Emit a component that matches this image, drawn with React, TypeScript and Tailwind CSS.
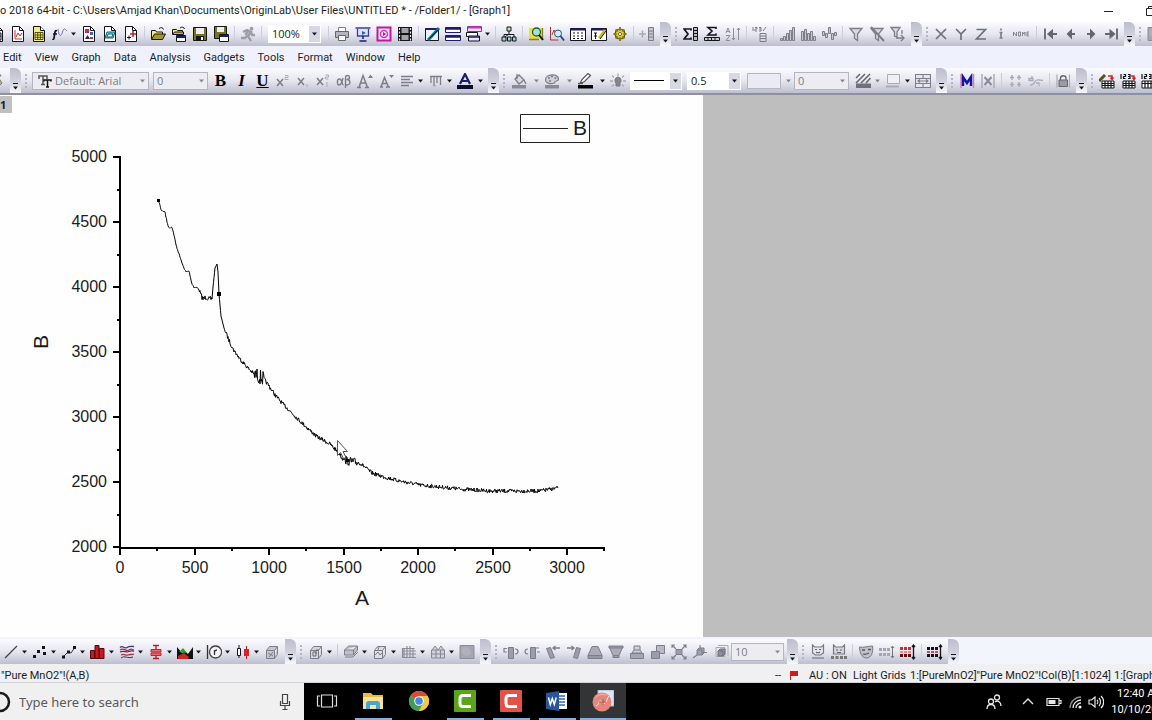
import React from "react";

/* Each icon is a list of [path, fill, stroke, strokeWidth] drawn on a 16x16 grid. */
type Layer = [string, string?, string?, number?];

const G = "#7d7e8a";
const L = "#a9aab6";
const K = "#14141c";
const N = "#1c1c6e";
const n = "none";
const DOC = "M2.5.5h7l4 4v11h-11z";
const FOLD = "M9.5.5v4h4";
const CUBE = "M2.5 6.5h8v8h-8zM2.5 6.5l3-4h8l-3 4M13.5 2.5v8l-3 4";
const GRIDBOX = "M3 8h12v7H3z";
const GRIDLINES = "M3 10.5h12M3 12.5h12M6 8v7M9 8v7M12 8v7";

const icons: Record<string, Layer[]> = {
  docGrid: [[DOC, "#fff", K], [FOLD, n, K], ["M4 7h8v7H4z", "#ddd", K], ["M4 10h8M8 7v7", n, K]],
  docGraph: [[DOC, "#fff", K], [FOLD, n, K], ["M5 4v9h7", n, "#c33"], ["M6 11l2-4 2 3 2-3", n, "#c22"]],
  docTable: [[DOC, "#f4ee7c", K], [FOLD, "#fff", K], ["M4 6.5h8v7H4zM4 9h8M4 11.3h8M6.7 6.5v7M9.4 6.5v7", n, "#55500c"]],
  func: [["M5 5c-2-1-2 1-2.500 4s-.5 5-2 4M1 8h4", n, K, 1.7], ["M6 3c1 8 3 8 4.500 3S13 3 15 5", n, "#7d6ca8"]],
  docMix: [[DOC, "#fff", K], [FOLD, n, K], ["M4 3h4v4H4z", "#d23"], ["M9 6h3v3H9z", "#36c"], ["M4 13l2.500-4 2.500 4z", "#226"], ["M9 11h3v2H9z", "#c33"]],
  docTeal: [[DOC, "#fff", K], [FOLD, n, K], ["M5 6h8l-2 6H3z", "#6fd0cf", "#167"], ["M6 8h5l-1 3H5z", "#fff", "#167"]],
  docStar: [[DOC, "#fff", K], [FOLD, n, K], ["M10 5v6M7 8h6", n, "#b22", 1.5], ["M4 11.500h4M6 9.500v4", n, K]],
  open: [["M1.500 13V4.500h4l1 1.500h6V8", "#f3ec8c", K], ["M1.500 13.500L4.500 8h11l-3 5.500z", "#a39b28", K], ["M9 2.500c2-1.500 4-1 4.500 1", n, K]],
  openTpl: [["M1.500 8V3.500h4l1 1h5V7", "#f3ec8c", K], ["M1.500 8.500h11V6h-9z", "#c8bf3a", K], ["M5.500 9.500h9v6h-9z", "#fff", K], ["M5.500 11h9", n, N, 2], ["M9 2c2-1.500 4-1 4.500 1", n, K]],
  save: [["M1.500 1.500h13v13h-13z", "#77751c", K], ["M4 2h8v6H4z", "#efeff3"], ["M4 10h8v4H4z", K], ["M9 11h2v3H9z", "#fff"]],
  saveTpl: [["M1.500.5h12v12h-12z", "#77751c", K], ["M4 1h7v5H4z", "#efeff3"], ["M6.500 8.500h9v7h-9z", "#fff", K], ["M6.500 10h9", n, N, 2]],
  run: [["M11.500.8a1.900 1.900 0 1 0 .1 0z", "#9c9da9"], ["M3 6l4-2 4 2-3 4 3 5M7.500 9.500L5 12H1M11 6l1 3h3M8 5L5.500 9", n, "#9c9da9", 2.4]],
  print: [["M4.500 1.500h7v4h-7z", "#fff", G], ["M1.500 5.500h13v6h-13z", "#b4b5c0", "#666"], ["M4.500 9.500h7v5h-7z", "#fff", "#666"]],
  present: [["M.5 2h15M2.500 3v7h11V3", "#dce4ff", "#3c3c9c", 1.3], ["M8 10v3M4.500 15h7", n, N, 1.5], ["M7 5l4 2-4 2z", "#3358c8"]],
  magenta: [["M1.500 1.500h13v13h-13z", "#ffe6ff", "#c1169f", 2], ["M4.500 8a3.500 3.500 0 1 1 7 0 3.500 3.500 0 0 1-7 0z", n, "#d235b8", 1.5], ["M7 6l3 2-3 2z", "#b1109a"]],
  film: [["M1 1h14v14H1z", K], ["M4.500 2h7v5h-7zM4.500 9h7v5h-7z", "#a2a5a5"], ["M2.500 2v2M2.500 5.500v2M2.500 9v2M2.500 12.500v2M13.500 2v2M13.500 5.500v2M13.500 9v2M13.500 12.500v2", n, "#eee", 1.2]],
  pen: [["M1.500 2.500h13v12h-13z", "#e8f6fb", K], ["M1.500 3h13", n, N, 2], ["M15 2L7 11l-3 3", n, "#186a8c", 3], ["M14 4L6 12", n, K]],
  tile: [["M.5 1.500h15v5H.5zM.5 9.500h15v5H.5z", "#fff", N], ["M.5 2.500h15M.5 10.500h15", n, N, 2.5]],
  cascade: [["M1.500.5h14v5h-14z", "#fbd8f8", "#9c2b96"], ["M2 1.500h13", n, "#b640b0", 2], ["M.5 6.500h11v4H.5z", "#fff", K], ["M2.500 10h11v5h-11z", "#e7e7f5", K], ["M3 11h10", n, N, 1.5]],
  tree: [["M8 5v4M3 11V8.500h10V11M8 8l-4 3", n, K], ["M6 1h4v4H6z", "#bde4c8", K], ["M1 11h4v4H1zM6.500 11h3.500v4H6.500zM11.500 11H15v4h-3.500z", "#9cd5cf", K]],
  lookup: [["M1 2h13v11H1z", "#eedd3f"], ["M1 13.500h10M14.500 2v12", n, "#8b7d17", 1.3], ["M4.500 6a4 4 0 1 1 8 0 4 4 0 0 1-8 0z", "#a9dfd0", "#1b5a4a", 1.3], ["M11 9l4 5", n, K, 2]],
  zoomChart: [["M1.500 1v13h8", n, "#a33"], ["M3 9l2-5 2 4 2-4", n, "#b33"], ["M5.500 7.500a3.500 3.500 0 1 1 7 0 3.500 3.500 0 0 1-7 0z", "#cdeef5", "#357"], ["M11.500 10l3.500 4.500", n, "#234a94", 2]],
  table: [["M.5 2.500h15v12H.5z", "#fff", K], ["M.5 3.500h15", n, N, 2], ["M3 7h2M7 7h2M11 7h2M3 10h2M7 10h2M11 10h2M3 12.500h2M7 12.500h2M11 12.500h2", n, K, 1.2]],
  tablePen: [["M.5 2.500h15v12H.5z", "#fff", K], ["M.5 3.500h15", n, N, 2], ["M3 7h3M3 10h3M4.500 7v6", n, K], ["M14 4L8 12", n, "#d2b90e", 2.5], ["M15 5L9 13", n, K]],
  gear: [["M8 3a5 5 0 1 0 .1 0z", "#d9c63a", "#5c530e", 1.2], ["M8 1v14M1.500 8h13M3.500 3.500l9 9M12.500 3.500l-9 9", n, "#857810", 1.8], ["M8 4.500a3.500 3.500 0 1 0 .1 0z", "#ddca3f"], ["M8 6.500a1.500 1.500 0 1 0 .1 0z", "#fff", "#5c530e"]],
  addCol: [["M0 8h7M3.500 4.500v7", n, L, 1.5], ["M9.500 1.500h5v13h-5z", "#c4c5cf", G], ["M9.500 5h5M9.500 8h5M9.500 11h5", n, G]],
  sumCol: [["M8 4.500V3H1l4 5-4 5h7v-1.500", n, K, 1.7], ["M10.500 1.500h4v13h-4z", "#bbb", K], ["M10.500 4.500h4M10.500 7.500h4M10.500 10.500h4", n, K]],
  sumRow: [["M12 3V1.500H4L8 5 4 9h8V7.500", n, K, 1.6], ["M.5 11.500h15v3H.5z", "#ccc", K], ["M4 11.500v3M7.500 11.500v3M11 11.500v3", n, K]],
  sort: [["M1 7l2-5 2 5M1.500 5.500h3M1 9.500h4l-4 5h4M8.500 2v12M7 12l1.500 2 1.500-2M13.500 14V2M12 4l1.500-2L15 4", n, "#8d8e99"]],
  pct: [["M1 1v4M3 1.500h2v1.500H3V5h2M7 1.500h2V5H7M7 3h2M11 5l3-4", n, G], ["M8 7.500h6v8H8zM8 10h6M8 12.500h6", n, G]],
  barsUp: [["M1.500 14.500v-2h2v2zM4.500 14.500v-4h2v4zM7.500 14.500v-7h2v7zM10.500 14.500v-10h2v10zM13.500 14.500v-13h2v13z", "#c6c7d1", G]],
  barsMid: [["M1.500 14.500v-9h2v9zM4.500 14.500v-11h2v11zM7.500 14.500v-7h2v7zM10.500 14.500v-9h2v9zM13.500 14.500v-4h2v4z", "#c6c7d1", G]],
  barsWave: [["M1.500 9.500v-4h2v4zM4.500 11.500v-4h2v4zM7.500 7.500v-6h2v6zM10.500 13.500v-6h2v6zM13.500 9.500v-3h2v3z", "#c6c7d1", G]],
  funnel: [["M2 2.500h12L9.500 8v6.500l-3-2V8z", "#d8d9e2", G, 1.3]],
  funnelOff: [["M2 2.500h12L9.500 8v6.500l-3-2V8z", "#d8d9e2", G, 1.3], ["M2 1l13 14", n, G, 2]],
  funnelGo: [["M1 1.500h9L7 6v5l-2.500-1V6z", "#d8d9e2", G, 1.3], ["M6 12h8M11 9l3 3-3 3M12 4v4", n, G, 1.3]],
  axX: [["M3 3l10 10M13 3L3 13", n, "#6e707c", 1.7]],
  axY: [["M3 3l5 5 5-5M8 8v6", n, "#6e707c", 1.7]],
  axZ: [["M3.500 3.500h9l-9 9.500h9.500", n, "#6e707c", 1.7]],
  axI: [["M8 2.500v2M8 6v6M6.500 6.500h3M6.500 12h3", n, "#7e808c", 1.7]],
  none: [["M.5 10V6l3 4V6M5.500 6h2v4h-2zM9.500 10V6l1.500 2 1-2v4M16 6h-2v4h2M14 8h2", n, "#84858f", 1]],
  first: [["M2 2.500v11", n, "#63656f", 1.8], ["M14 8H7M9 5L5.500 8 9 11z", "#63656f", "#63656f", 2]],
  prev: [["M12 8H7M8 5L5 8l3 3z", "#63656f", "#63656f", 2]],
  next: [["M4 8h5M8 5l3 3-3 3z", "#63656f", "#63656f", 2]],
  last: [["M14 2.500v11", n, "#63656f", 1.8], ["M2 8h6M7.500 5L11 8l-3.500 3z", "#63656f", "#63656f", 2]],
  brush: [["M3 12l6-8 4 6-4 4z", "#c7b48c", "#777"], ["M9 4l3-2", n, G, 2]],
  sup: [["M2 6l6 7M8 6l-6 7", n, G, 1.5], ["M10 2.500h3v2h-3v2h3.500", n, L]],
  sub: [["M3 5l6 7M9 5l-6 7", n, G, 1.5], ["M12 11v3", n, L]],
  supsub: [["M2 5l6 7M8 5l-6 7", n, G, 1.5], ["M10.500 2h3v2h-3v2h3M12 9v5", n, L]],
  greek: [["M7 5c-1 5-2 7-4 7S.5 6 3.500 6s2 6 4 6M9.500 15V5c0-3.500 4-3 4-.5 0 2-3 2-3 2 4.500 0 4.500 5.500.5 5.500H9.500", n, G, 1.4]],
  fontUp: [["M0 14.500h4M8 14.500h4M2 14.500L6 2.500l4.500 12M3.500 10h5.500", n, G, 1.5], ["M11 5l2.500-3.500L16 5z", G]],
  fontDown: [["M2 14h3M8 14h4M3 14L6.500 4.500 10.500 14M4.500 10.500h4.500", n, G, 1.5], ["M11 2l2.500 3L16 2z", G]],
  align: [["M2 3.500h12M2 6.500h9M2 9.500h12M2 12.500h8", n, G, 1.3]],
  vert: [["M2 3.500h12M3 3v7M6 3v10M9 3v7M12.500 3v9", n, G, 1.3], ["M5 13h3", n, L]],
  fontColor: [["M0 12h16v4H0z", "#0c0c2c"], ["M3 11L8 1l5 10M5 8h6", n, N, 2.2]],
  bucket: [["M1 12h14v3.500H1z", "#898a92"], ["M4 6l4-4 5 5-5 4z", "#d9dae2", G, 1.3], ["M13 7l2 4M6 1v5", n, G, 1.3]],
  palette: [["M1 12h14v3.500H1z", "#898a92"], ["M1.500 6.500C1.500 1 14.500 0 14.500 6c0 3-4 1-4 4-3 1-9 1-9-3.500z", "#cfd0d9", G, 1.2], ["M4 5h2M7 3.500h2M10.500 5h2M5 8h2", n, G, 1.6]],
  pencil: [["M1 12h15v3.500H1z", "#000"], ["M3 10.500l2-4 6-6 2.500 2-6 6z", "#fff", "#555", 1.2], ["M1 10.500h5", n, "#555", 1.2]],
  glow: [["M8 4a3.500 3.500 0 0 1 2 6v3H6v-3a3.500 3.500 0 0 1 2-6z", "#85868f", "#777", 1], ["M8 .5v2.500M2 2.500L4 4.500M14 2.500L12 4.500M0 8h3M13 8h3M2 13.500l2-2M14 13.500l-2-2", n, L, 1.3]],
  hatch: [["M1 10.500h15V15H1z", "#707178"], ["M1 5l4-4M1 10l9-9M6 10l9-9M11 10l4.500-5", n, "#64656e", 1.5]],
  border: [["M2.500 1.500h12v9h-12z", "#efeff5", L], ["M1 13.500h13", n, L, 2]],
  cells: [["M.5 1.500h15v13H.5zM.5 5.500h15M.5 10.500h15M8 1.500v4M8 10.500v4M3 8h10M5 6.500L3 8l2 1.500M11 6.500L13 8l-2 1.500", "#e4e5ed", G, 1.1]],
  mBlue: [["M2 1v14M14.500 1v14", n, "#d67fb0", 1.5], ["M4 13V4l4 6 4-6v9", n, "#1515a0", 2.5]],
  xGray: [["M2 1v14M14 1v14", n, L, 1.4], ["M4.500 4l7 8M11.500 4l-7 8", n, "#8b8c98", 2]],
  scatterA: [["M5 2v5M3 4.500h4M5 9v5M3 11.500h4M12 2v5M10 4.500h4M12 9v5M10 11.500h4", n, L, 1.4]],
  scatterB: [["M1 5.500h4v2H1zM2 12c3 0 4-1 5-3.500S12 7 15 7.500M4 3v3M8 10h3v3", n, L, 1.3]],
  lock: [["M2 1.500v13M14.500 1.500v13", n, L, 1.2], ["M5.500 7V5c0-3 5.500-3 5.500 0v2", n, "#666", 1.3], ["M4 7h8.500v6.500H4z", "#9a9ba5", "#666"]],
  wand: [[GRIDBOX, "#fff", K], [GRIDLINES, n, K, 1.2], ["M0 8l6-6", n, "#555310", 3], ["M9 3h4v3M11.500 4.500l1.500 2 1.500-2", n, "#d22", 1.5]],
  num1: [[GRIDBOX, "#fff", K], [GRIDLINES, n, K, 1.2], ["M1 1v5M3.500 1.500h2v2h-2v2h2M8 1.500h2v4H8M8 3.500h2", n, K, 1.2], ["M11 3h3v3M12.500 4.500l1.500 2 1.500-2", n, "#d22", 1.4]],
  num2: [["M1 8h12v7H1z", "#fff", K], ["M1 10.500h12M4 8v7M7 8v7M10 8v7", n, K, 1.2], ["M1 1v5M3.500 1.500h2v2h-2v2h2M8 1.500h2v4H8M8 3.500h2", n, K, 1.2], ["M11 3h3v3M12.500 4.500l1.500 2 1.500-2", n, "#d22", 1.4]],
  line: [["M2 14L14 2", n, "#444", 1.2]],
  dots: [["M1 11h3v3H1zM5 6h3v3H5zM11 8h3v3h-3zM10 2h3v3h-3z", K]],
  lineDots: [["M2 13l5-5 3 1 4-6", n, "#333"], ["M1 11.500h3v3H1zM6 6.500h3v3H6zM12 2h3v3h-3z", K]],
  columns: [["M.5 14.500v-8h4v8zM5 14.500v-13h4v13zM9.500 14.500v-10h4.500v10z", "#c31a22", "#54090c"]],
  multi: [["M1 3.500c3-3 4 2 7 0s4-1 7-1M1 8c4-2 6 1 9-.5s4 0 5-.5", n, "#33338c", 1.3], ["M1 6c4-3 6 2 9 0s3 0 5 0M2 11c3-2 5 1 7 0s4 0 6-1", n, "#bb2929", 1.3], ["M2 14c4-3 6 1 12-1", n, "#334"]],
  box: [["M3 5.500h10v2.500H3zM3 9h10v2.500H3z", "#f0686c", "#c3222a"], ["M8 1v4M8 11.500V15M5 1.500h6M5 14.500h6", n, "#c31a22", 1.4]],
  area: [["M0 15V3l5 6 3-2 3 3 5-7v12z", "#111"], ["M2 8l4-4 4 5z", "#2aa52a"], ["M1 12l6-3 5 4-1 2H1z", "#c9232b"]],
  polar: [["M1.500 1v14", n, "#333", 1.3], ["M9.500 2a6 6 0 1 0 .1 0z", "#f4f4fa", "#444", 1.3], ["M8.500 11V6M8.500 7.500c1-1.500 2-1.500 2.500-1.500", n, "#333", 1.3]],
  candle: [["M4 1v3M4 11v3", n, K], ["M2.500 4.500h3v7h-3z", "#fff", K], ["M11.500 2v13", n, "#c31a22"], ["M9 5h5v7H9z", "#db2229"]],
  cube: [[CUBE, "#c5c6d1", G], ["M4 9l5 3M5 13l4-5", n, G]],
  cubeAxes: [[CUBE, "#d4d5de", G], ["M5 12V8h3v4zM8 10V6h3", n, "#6c6d78"]],
  slab: [["M1.500 10V6l4-4h9v4l-4 5h-9zM1.500 6h9l4-4M10.500 6v5", "#bfc0cb", G], ["M2 13h8l5-5", n, G]],
  wire: [[CUBE, "#dcdde5", G], ["M3 11l3-3 2 3 2-2", n, G], ["M7 3l-1 3", n, G]],
  grid3: [["M1.500 13.500v-9h12M3 4v9M6 2v11M9 2v11M12 4v9M1 7h14M1 10h14M1 13.500h14", n, "#8c8d98", 1.2]],
  mesh: [["M1.500 6h13v8h-13zM1.500 10h13M6 6v8M10.500 6v8M2 6l3-4 3 4 3-4 3 4", "#cfd0d9", "#878893"]],
  blob: [["M1 1.500h14v13H1z", "#a5a6b3", "#8c8d99"], ["M3 4c5-3 8 1 9 4s-5 4-7 3-4-4-2-7z", "#b0b1bd"]],
  tiltL: [["M5.500 3.500h5v11h-5z", "#9c9dab", G], ["M4 8H1V4.500h3M12 5c4 0 4 5 0 5", n, G, 1.2]],
  tiltR: [["M6.500 3.500h5v11h-5z", "#9c9dab", G], ["M13 8h3M4 5c-4 0-4 5 0 5M12 4h3", n, G, 1.2]],
  rotL: [["M1.500 4.500l4-1 4 10-4 1z", "#9c9dab", G], ["M8 4h7M10.500 2L8 4l2.500 2", n, G, 1.3]],
  rotR: [["M14.500 4.500l-4-1-3 10 4 1z", "#9c9dab", G], ["M1 4h7M5.500 2L8 4 5.500 6", n, G, 1.3]],
  trapUp: [["M5 2.500h6l4 9H1z", "#aaabb7", G], ["M1 14.500h14v-3H1z", "#9798a5", G]],
  trapDown: [["M1 2.500h14l-4 9H5z", "#aaabb7", G], ["M1 2h14v2H1zM5 11.500h6v2H5z", "#9798a5", G]],
  lift: [["M1.500 9.500h13v5h-13z", "#a5a6b3", G], ["M5 6h6l2 3H3zM5 6V2h6v4", "#cfd0da", G]],
  overlap: [["M6.500 1.500h8v8h-8z", "#b8b9c4", G], ["M1.500 7.500h8v7h-8z", "#9c9dab", G]],
  expand: [["M5 5.500h6v5H5z", "#9c9dab", G], ["M1 4V1h3M12 1h3v3M1 12v3h3M12 15h3v-3M1 1l4 4M15 1l-4 4M1 15l4-4M15 15l-4-4", n, G, 1.1]],
  move: [["M5 6h5v5H5zM5 6l2-2h5v5l-2 2", "#a0a1ae", G], ["M8 1v3M10 8.500h5M1 14l4-3", n, G, 1.1]],
  boxIn: [["M3 3.500h9v9H3zM5 1.500h10v10", n, L], ["M5 7h5v5H5zM5 7l2-2h5v5l-2 2", "#8f909d", "#6d6e79"]],
  mask: [["M2.500 1l2 2h7l2-2v8l-3 2h-5l-3-2z", "#e6e7ee", "#777883", 1.2], ["M5 5.500h2M9 5.500h2M6 8c1 1 3 1 4 0M2 14h12", n, "#666", 1.2]],
  maskDots: [["M2.500 1l2 2h7l2-2v9h-11z", "#d5d6df", "#777883", 1.2], ["M5 6h2M9 6h2M6 8.500h4", n, "#666", 1.2], ["M0 12h3v3H0zM4.500 12h3v3h-3zM9 12h3v3H9zM13 12h3v3h-3z", "#777"]],
  theatre: [["M1.500 3c4 1 9-1 13-1 1 6-1 12-6 12s-7-6-7-11z", "#bfc0cb", "#777"], ["M4 6h3M10 5.500h3M5 10c2 1 4 0 6-1", n, "#555", 1.3]],
  dotsGray: [["M0 4h3v3H0zM4 4h3v3H4zM8 4h3v3H8zM0 9h3v3H0zM4 9h3v3H4zM8 9h3v3H8z", "#a5a6b1"], ["M13.500 2v12M12 4l1.500-2L15 4M12 12l1.500 2 1.500-2", n, "#777"]],
  dotsRed: [["M0 3h3v3H0zM4 3h3v3H4zM8 3h3v3H8z", "#b33"], ["M0 7h3v2H0zM4 7h3v2H4zM8 7h3v2H8z", "#e88"], ["M0 10h3v3H0zM4 10h3v3H4zM8 10h3v3H8z", "#511"], ["M13.500 1v14M12 3l1.500-2L15 3M12 13l1.500 2 1.500-2", n, K, 1.3]],
  dotsBlack: [["M0 3h3v3H0zM4 3h3v3H4zM8 3h3v3H8z", K], ["M0 7h3v2H0zM4 7h3v2H4zM8 7h3v2H8z", "#d44"], ["M0 10h3v3H0zM4 10h3v3H4zM8 10h3v3H8z", K], ["M13.500 1v14M12 3l1.500-2L15 3M12 13l1.500 2 1.500-2", n, K, 1.3]],
};

function Icon({ name }: { name: string }) {
  return (
    <svg viewBox="0 0 16 16" className="size-4 shrink-0" aria-hidden="true">
      {icons[name].map(([d, fill = n, stroke = n, sw = 1], i) => (
        <path key={i} d={d} fill={fill} stroke={stroke} strokeWidth={sw} />
      ))}
    </svg>
  );
}

function Arrow({ muted }: { muted?: boolean }) {
  return (
    <svg viewBox="0 0 7 4" className={`h-1 w-[7px] shrink-0 ${muted ? "text-[#85868f]" : "text-[#16161e]"}`} aria-hidden="true">
      <path d="M1 .5h5L3.500 3.500z" fill="currentColor" />
    </svg>
  );
}

function Tools({ names, cell = "w-[21px]" }: { names: string[]; cell?: string }) {
  return (
    <>
      {names.map((name) => (
        <button key={name} type="button" aria-label={name} className={`flex h-full shrink-0 items-center justify-center ${cell}`}>
          <Icon name={name} />
        </button>
      ))}
    </>
  );
}

function Letter({ label, text, look }: { label: string; text: string; look: string }) {
  return (
    <button
      type="button"
      aria-label={label}
      className={`flex h-full w-[21px] shrink-0 items-center justify-center font-['Liberation_Serif',serif] text-[17px] leading-4 font-bold text-black ${look}`}
    >
      {text}
    </button>
  );
}

function Drops({ names, cell = "w-[29px]", muted }: { names: string[]; cell?: string; muted?: boolean }) {
  return (
    <>
      {names.map((name) => (
        <button key={name} type="button" aria-label={`${name} options`} className={`flex h-full shrink-0 items-center justify-between pr-px pl-[3px] ${cell}`}>
          <Icon name={name} />
          <Arrow muted={muted} />
        </button>
      ))}
    </>
  );
}

function Sep({ cell = "w-[6px]" }: { cell?: string }) {
  return (
    <span className={`flex h-full shrink-0 items-center justify-center ${cell}`}>
      <span className="h-4 w-px bg-[#cbcdd9]" />
    </span>
  );
}

function More({ grip = true }: { grip?: boolean }) {
  return (
    <>
      <button
        type="button"
        aria-label="Toolbar options"
        className="ml-[3px] flex h-full w-[11px] shrink-0 flex-col items-center justify-end gap-[2px] rounded-tr-md bg-linear-to-b from-[#bdbecc] via-[#cfd0dc] to-[#f7f7fd] pb-[3px]"
      >
        <span className="h-px w-[5px] bg-[#16161e]" />
        <Arrow />
      </button>
      {grip && (
        <span className="flex h-full w-[9px] shrink-0 flex-col items-center justify-center gap-[2px]">
          {[0, 1, 2, 3].map((i) => (
            <span key={i} className="size-[2px] bg-[#b3b5c3]" />
          ))}
        </span>
      )}
    </>
  );
}

function Combo({ label, value, cell, tone, icon, swatch }: {
  label: string;
  value: string;
  cell: string;
  tone: "live" | "muted";
  icon?: boolean;
  swatch?: boolean;
}) {
  const live = tone === "live";
  return (
    <label className={`relative flex h-[18px] shrink-0 items-center ${cell}`}>
      <select
        aria-label={label}
        defaultValue={value}
        className={`h-full w-full appearance-none border text-[11px] leading-4 ${icon ? "pl-[22px]" : "pl-[3px]"} ${
          live ? "border-white bg-white text-[#222]" : "border-[#b4b6c2] bg-[#ededf1] text-[#7c7d85]"
        }`}
      >
        <option>{value}</option>
      </select>
      {icon && (
        <svg viewBox="0 0 14 14" className="absolute left-[6px] size-[14px]" aria-hidden="true">
          <path d="M1 5V2h8v3M5 2v8M3 10.500h4" fill="none" stroke="#555" strokeWidth="1.500" />
          <path d="M6 7.500V6h7v1.500M9.500 6v7M8 13h3" fill="none" stroke="#111" strokeWidth="1.500" />
        </svg>
      )}
      {swatch && <span className="absolute left-1 h-px w-[30px] bg-black" />}
      <span className={`absolute right-px flex h-4 w-[11px] items-center justify-center ${live ? "bg-[#d7d8e3]" : ""}`}>
        <Arrow muted={!live} />
      </span>
    </label>
  );
}

const bar = "flex shrink-0 items-center overflow-hidden bg-linear-to-b from-[#fbfbff] via-[#e6e7f0] to-[#bebfce]";
const menus = ["Edit", "View", "Graph", "Data", "Analysis", "Gadgets", "Tools", "Format", "Window", "Help"];

/* Spectrum samples in page units; the noise is seeded so every render is identical. */
const knots: [number, number][] = [
  [158, 200], [160, 205], [161, 210], [165, 212], [167, 222], [169, 228], [172, 227], [174, 235], [176, 245], [180, 257],
  [183, 266], [186, 272], [189, 271], [192, 284], [194, 287], [198, 288], [201, 295], [203, 299], [206, 297], [209, 299],
  [212, 299], [213, 287], [215, 268], [217, 264], [218, 272], [219, 294], [221, 316], [224, 328], [228, 338], [233, 349],
  [240, 359], [248, 368], [254, 374], [264, 379], [269, 386], [275, 395], [283, 404], [300, 421], [316, 436], [330, 444],
  [340, 454], [347, 461], [360, 463], [372, 473], [384, 477], [400, 481], [420, 485], [440, 487], [460, 489], [490, 491],
  [520, 491], [540, 491], [558, 488],
];

function buildCurve(): string {
  let seed = 7;
  const rand = () => {
    seed = (seed * 16807) % 2147483647;
    return seed / 2147483647 - 0.5;
  };
  const out: string[] = [];
  for (let i = 0; i < knots.length - 1; i++) {
    const [x0, y0] = knots[i];
    const [x1, y1] = knots[i + 1];
    for (let x = x0; x < x1; x += 0.5) {
      const t = (x - x0) / (x1 - x0);
      let spread = x < 200 ? 1.5 : x < 212 ? 5 : x < 225 ? 0 : 4;
      if (x > 254 && x < 264) spread = 15;
      if (x > 340 && x < 358) spread = 9;
      const y = y0 + (y1 - y0) * t + rand() * spread;
      out.push(`${x} ${y.toFixed(1)}`);
    }
  }
  return `M${out.join("L")}L558 488`;
}

const curve = buildCurve();
const yTicks = [5000, 4500, 4000, 3500, 3000, 2500, 2000];
const xTicks = [0, 500, 1000, 1500, 2000, 2500, 3000];

function Chart() {
  return (
    <svg viewBox="0 95 702 542" width="702" height="542" className="shrink-0 font-['Liberation_Sans',Arial,sans-serif]" role="img" aria-label="Graph1">
      <g stroke="#000" strokeWidth="2" fill="none" shapeRendering="crispEdges">
        <path d="M120 156V548H605" />
        {yTicks.map((v, i) => (
          <path key={v} d={`M113 ${157 + i * 65}h7${i < 6 ? `M117 ${190 + i * 65}h3` : ""}`} />
        ))}
        {xTicks.map((v, i) => (
          <path key={v} d={`M${Math.round(120 + i * 74.5)} 548v7M${Math.round(157 + i * 74.5)} 548v3`} />
        ))}
      </g>
      <g fontSize="16" fill="#1b1b22">
        {yTicks.map((v, i) => (
          <text key={v} x="107" y={162 + i * 65} textAnchor="end">{v}</text>
        ))}
        {xTicks.map((v, i) => (
          <text key={v} x={Math.round(120 + i * 74.5)} y="573" textAnchor="middle">{v}</text>
        ))}
      </g>
      <g fontSize="21" fill="#1b1b22">
        <text x="362" y="605" textAnchor="middle">A</text>
        <text transform="translate(48 342) rotate(-90)" textAnchor="middle">B</text>
        <text x="573" y="135">B</text>
      </g>
      <path d="M520.500 114.500h69v28h-69zM523 128.500h45" fill="none" stroke="#222" />
      <path d={curve} fill="none" stroke="#000" strokeLinejoin="bevel" />
      <path d="M157 199h3v3h-3zM217 292h4v4h-4zM346 459h3v3h-3z" fill="#000" />
      <path d="M337.500 440.500v15l3-3 3 6 2.500-1-3-6h4.500z" fill="#fff" stroke="#555" />
    </svg>
  );
}

function TaskIcon({ name, active, open, children }: { name: string; active?: boolean; open?: boolean; children: React.ReactNode }) {
  return (
    <button type="button" aria-label={name} className={`flex h-full w-[46px] shrink-0 flex-col items-center ${active ? "bg-[#333436]" : ""}`}>
      <span className="flex flex-1 items-center">
        <svg viewBox="0 0 22 22" className="size-[22px]" aria-hidden="true">{children}</svg>
      </span>
      <span className={`h-[2px] ${active ? "w-full" : "w-[37px]"} ${open ? "bg-[#7fb2e4]" : ""}`} />
    </button>
  );
}

export default function App() {
  return (
    <div className="flex h-screen w-full flex-col overflow-hidden bg-[#f0f0f0] font-['Open_Sans','Noto_Sans',sans-serif] text-[11px] text-[#1d1d24]">
      <header className="flex h-[22px] shrink-0 items-center justify-between bg-white whitespace-nowrap">
        <h1 className="font-['Roboto',sans-serif] text-[11px] leading-4">o 2018 64-bit - C:\Users\Amjad Khan\Documents\OriginLab\User Files\UNTITLED * - /Folder1/ - [Graph1]</h1>
        <div className="flex h-full w-[50px] shrink-0 items-center justify-between overflow-hidden">
          <button type="button" aria-label="Minimize" className="flex h-full w-3 items-center justify-center">
            <span className="h-px w-[9px] bg-[#222]" />
          </button>
          <button type="button" aria-label="Restore" className="flex h-full w-[6px] items-center overflow-hidden">
            <svg viewBox="0 0 10 10" className="size-[10px] shrink-0" aria-hidden="true">
              <path d="M.5 2.500h7v7h-7zM2.500 2.500v-2h7v7h-2" fill="none" stroke="#222" />
            </svg>
          </button>
        </div>
      </header>

      <div role="toolbar" aria-label="Standard" className={`${bar} h-6`}>
        <div className="-ml-[14px] flex h-full shrink-0 items-center">
          <Tools names={["docGrid", "docGraph", "docTable"]} />
          <Drops names={["func"]} />
          <Tools names={["docMix", "docTeal", "docStar"]} />
          <Sep />
          <Tools names={["open", "openTpl", "save", "saveTpl"]} />
          <Sep />
          <Tools names={["run"]} />
          <Sep />
          <Combo label="Zoom" value="100%" tone="live" cell="mx-1 w-[53px]" />
          <Sep />
          <Tools names={["print", "present", "magenta", "film"]} />
          <Sep />
          <Tools names={["pen", "tile"]} />
          <Drops names={["cascade"]} />
          <Sep />
          <Tools names={["tree"]} />
          <Sep />
          <Tools names={["lookup", "zoomChart", "table", "tablePen", "gear"]} />
          <Sep />
          <Tools names={["addCol"]} />
          <More />
          <Tools names={["sumCol", "sumRow", "sort"]} />
          <Sep />
          <Tools names={["pct"]} />
          <Sep />
          <Tools names={["barsUp", "barsMid", "barsWave"]} />
          <Sep />
          <Tools names={["funnel", "funnelOff", "funnelGo"]} />
          <More />
          <Tools names={["axX", "axY", "axZ", "axI", "none"]} cell="w-5" />
          <Sep cell="w-[10px]" />
          <Tools names={["first", "prev", "next", "last"]} cell="w-5" />
          <More />
          <Tools names={["blob"]} />
        </div>
      </div>

      <nav className="flex h-[22px] shrink-0 items-center bg-[#eff2fd] pt-[2px] pl-[3px]">
        <ul className="flex items-center gap-[13px] font-['Roboto',sans-serif]">
          {menus.map((m) => (
            <li key={m}>
              <button type="button" className="leading-4">{m}</button>
            </li>
          ))}
        </ul>
      </nav>

      <div role="toolbar" aria-label="Format" className={`${bar} h-[27px] border-b-2 border-[#8f90a4]`}>
        <div className="-ml-[14px] flex h-full shrink-0 items-center">
          <Tools names={["brush"]} />
          <More />
          <Combo label="Font" value="Default: Arial" tone="muted" icon cell="mx-[2px] w-[117px]" />
          <Combo label="Font size" value="0" tone="muted" cell="mx-[2px] w-[55px]" />
          <Letter label="Bold" text="B" look="" />
          <Letter label="Italic" text="I" look="italic" />
          <Letter label="Underline" text="U" look="underline" />
          <Tools names={["sup", "sub", "supsub"]} cell="w-5" />
          <Tools names={["greek", "fontUp", "fontDown"]} />
          <Drops names={["align", "vert"]} />
          <Drops names={["fontColor"]} cell="w-[31px]" />
          <More />
          <Drops names={["bucket", "palette"]} cell="w-[33px]" muted />
          <Drops names={["pencil"]} cell="w-[33px]" />
          <Tools names={["glow"]} />
          <Combo label="Line style" value="" tone="live" swatch cell="mx-[2px] w-[52px]" />
          <Combo label="Line width" value="0.5" tone="live" cell="mx-[3px] w-[54px]" />
          <span className="ml-[3px] flex w-[45px] shrink-0 items-center justify-between">
            <button type="button" aria-label="Fill pattern" className="h-4 w-[34px] border border-[#b4b6c8] bg-[#e9eaf3]" />
            <Arrow muted />
          </span>
          <Combo label="Pattern width" value="0" tone="muted" cell="mr-[3px] ml-[2px] w-[55px]" />
          <Drops names={["hatch"]} cell="w-[30px]" muted />
          <Drops names={["border"]} cell="w-[30px]" />
          <Tools names={["cells"]} />
          <More />
          <Tools names={["mBlue", "xGray"]} />
          <Sep />
          <Tools names={["scatterA", "scatterB"]} />
          <Sep />
          <Tools names={["lock"]} />
          <More />
          <Tools names={["wand", "num1", "num2"]} />
        </div>
      </div>

      <main className="relative flex min-h-0 flex-1 overflow-hidden bg-[#bebebe]">
        <section className="w-[61%] overflow-hidden bg-[#fefefe]">
          <Chart />
        </section>
        <button type="button" className="absolute top-px left-0 flex h-[17px] w-3 items-center bg-[#c0c0c0] text-[11px] leading-4 font-bold">1</button>
      </main>

      <div className="flex h-[27px] shrink-0 bg-[#f3f5fd] pt-[2px]">
        <div role="toolbar" aria-label="Graph types" className={`${bar} h-[25px] rounded-r-md`}>
          <Drops names={["line", "dots", "lineDots", "columns", "multi", "box", "area", "polar", "candle"]} />
          <Tools names={["cube"]} />
          <More />
          <Drops names={["cubeAxes"]} />
          <Sep />
          <Drops names={["slab", "wire", "grid3", "mesh"]} />
          <Tools names={["blob"]} />
          <More />
          <Tools names={["tiltL", "tiltR", "rotL", "rotR", "trapUp", "trapDown", "lift", "overlap", "expand", "move", "boxIn"]} />
          <Combo label="Angle" value="10" tone="muted" cell="w-[53px]" />
          <More />
          <Tools names={["mask", "maskDots"]} />
          <Sep />
          <Tools names={["theatre", "dotsGray", "dotsRed"]} />
          <Sep />
          <Tools names={["dotsBlack"]} />
          <More grip={false} />
        </div>
      </div>

      <footer className="flex h-[19px] shrink-0 items-center border-b border-[#d4d4d8] bg-[#f0eff1] pt-1 font-['Roboto',sans-serif] leading-[15px] whitespace-nowrap">
        <span className="min-w-0 flex-1 pl-px">"Pure MnO2"!(A,B)</span>
        <span className="w-[14px] shrink-0">--</span>
        <svg viewBox="0 0 10 10" className="size-[10px] shrink-0" aria-hidden="true">
          <path d="M1 1h8v5H2v4H1z" fill="#c81e1e" />
        </svg>
        <span className="ml-[10px] w-[44px] shrink-0">AU : ON</span>
        <span className="w-[57px] shrink-0">Light Grids</span>
        <span className="w-[204px] shrink-0">1:[PureMnO2]"Pure MnO2"!Col(B)[1:1024]</span>
        <span className="w-[38px] shrink-0 overflow-hidden">1:[Graph1]</span>
      </footer>

      <div className="flex h-[37px] shrink-0 items-center bg-black">
        <label className="relative flex h-full w-[304px] shrink-0 items-center overflow-hidden bg-[#f0f0f0]">
          <svg viewBox="0 0 11 22" className="h-[22px] w-[11px] shrink-0" aria-hidden="true">
            <path d="M0 2a9 9 0 0 1 0 18" fill="none" stroke="#1a1a1a" strokeWidth="2.500" />
          </svg>
          <input
            type="text"
            aria-label="Search"
            placeholder="Type here to search"
            className="ml-2 min-w-0 flex-1 bg-transparent font-['Noto_Sans',sans-serif] text-[13px] leading-5 placeholder:text-[#5a5a5a]"
          />
          <svg viewBox="0 0 12 18" className="mr-[13px] h-[18px] w-3 shrink-0" aria-hidden="true">
            <path d="M3.500 1.500h5v9h-5zM1.500 8v4.500h9V8M6 12.500v4M3.500 16.500h5" fill="none" stroke="#444" strokeWidth="1.200" />
          </svg>
        </label>
        <TaskIcon name="Task view">
          <path d="M5.500 5h11v12h-11zM4 6H1.500v10H4M18 6h2.500v10H18" fill="none" stroke="#ddd" strokeWidth="1.200" />
        </TaskIcon>
        <TaskIcon name="File Explorer" open>
          <path d="M1 3h8l2 2h10v14H1z" fill="#e9b94c" />
          <path d="M1 7h20v12H1z" fill="#fbe29a" />
          <path d="M4 19v-5c0-2 1-3 3-3h8c2 0 3 1 3 3v5h-4v-4H8v4z" fill="#45a6d6" />
        </TaskIcon>
        <TaskIcon name="Chrome">
          <circle cx="11" cy="11" r="10" fill="#f6c944" />
          <path d="M11 11L2.300 6a10 10 0 0 1 17.400 0z" fill="#dc4a3d" />
          <path d="M11 11v0L2.300 6A10 10 0 0 0 11 21l4.500-8z" fill="#3f9f55" />
          <path d="M11 6h8.700a10 10 0 0 1-8.700 15l4.500-8z" fill="#f6c944" />
          <circle cx="11" cy="11" r="4.800" fill="#fff" />
          <circle cx="11" cy="11" r="3.800" fill="#4a86e0" />
        </TaskIcon>
        <TaskIcon name="Camtasia" open>
          <rect width="22" height="22" rx="1" fill="#5aa51c" />
          <path d="M17 5.500H9Q6 5.500 6 8.500v5q0 3 3 3h8" fill="none" stroke="#fff" strokeWidth="3" />
        </TaskIcon>
        <TaskIcon name="Camtasia Recorder" open>
          <rect width="22" height="22" rx="1" fill="#e2524b" />
          <path d="M17 5.500H9Q6 5.500 6 8.500v5q0 3 3 3h8" fill="none" stroke="#fff" strokeWidth="3" />
        </TaskIcon>
        <TaskIcon name="Word" open>
          <path d="M11 3h10v16H11z" fill="#fff" />
          <path d="M13 6h6M13 9h6M13 12h6M13 15h6" stroke="#3564ad" strokeWidth="1.300" />
          <path d="M0 3l13-2v20L0 19z" fill="#2a559c" />
          <path d="M2.500 7.500l1.800 7 2-6 2 6 1.900-7" fill="none" stroke="#fff" strokeWidth="1.500" />
        </TaskIcon>
        <TaskIcon name="Origin" open active>
          <path d="M6 0h16v16H6z" fill="#dfe6f1" stroke="#9fb0c8" />
          <circle cx="10" cy="12" r="9.500" fill="#e2877b" />
          <path d="M2 9a9 9 0 0 1 14-3 13 13 0 0 0-14 3z" fill="#f0b1a6" />
          <path d="M4 16c4-2 2-6 5-5s1 5 4 2 2-5 4-7" fill="none" stroke="#fbe3df" />
          <path d="M7 12h7M11 9v6" stroke="#b9534b" />
        </TaskIcon>

        <div className="ml-auto flex h-full shrink-0 items-center text-white">
          <button type="button" aria-label="People" className="flex w-[30px] justify-center">
            <svg viewBox="0 0 16 16" className="size-4" fill="none" stroke="#e6e6e6" strokeWidth="1.300" aria-hidden="true">
              <circle cx="5" cy="7.500" r="2.500" />
              <path d="M1 15c0-6 8-6 8 0" />
              <circle cx="11" cy="3.500" r="2.500" />
              <path d="M9 8c3-2 6 0 6 4" />
            </svg>
          </button>
          <button type="button" aria-label="Hidden icons" className="flex w-[37px] justify-center">
            <svg viewBox="0 0 12 7" className="h-[7px] w-3" aria-hidden="true">
              <path d="M1 6l5-5 5 5" fill="none" stroke="#e6e6e6" strokeWidth="1.300" />
            </svg>
          </button>
          <button type="button" aria-label="Battery" className="flex w-4 justify-center">
            <svg viewBox="0 0 16 10" className="h-[10px] w-4" aria-hidden="true">
              <path d="M1 1.500h12v7H1zM13 3.500h2v3h-2" fill="none" stroke="#e6e6e6" strokeWidth="1.200" />
              <path d="M2.500 3h7v4h-7z" fill="#e6e6e6" />
            </svg>
          </button>
          <button type="button" aria-label="Network" className="flex w-[26px] justify-center">
            <svg viewBox="0 0 14 14" className="size-[14px]" aria-hidden="true">
              <path d="M2 13A11 11 0 0 1 13 2" fill="none" stroke="#8a8a8a" strokeWidth="1.300" />
              <path d="M5 13a8 8 0 0 1 8-8M8 13a5 5 0 0 1 5-5" fill="none" stroke="#e6e6e6" strokeWidth="1.300" />
              <circle cx="12" cy="12" r="1.500" fill="#fff" />
            </svg>
          </button>
          <button type="button" aria-label="Volume" className="flex w-4 justify-center">
            <svg viewBox="0 0 16 14" className="h-[14px] w-4" fill="none" stroke="#e6e6e6" strokeWidth="1.200" aria-hidden="true">
              <path d="M1 5h2.500L7 2v10L3.500 9H1zM9 5c1 1 1 3 0 4M11 3c2 2 2 6 0 8M13 1c3.500 3 3.500 9 0 12" />
            </svg>
          </button>
          <div className="ml-[7px] w-[41px] overflow-hidden">
            <div className="flex w-[59px] flex-col items-center font-['Roboto',sans-serif] text-[11px] leading-4">
              <time>12:40 AM</time>
              <time>10/10/2018</time>
            </div>
          </div>
        </div>
      </div>
    </div>
  );
}
